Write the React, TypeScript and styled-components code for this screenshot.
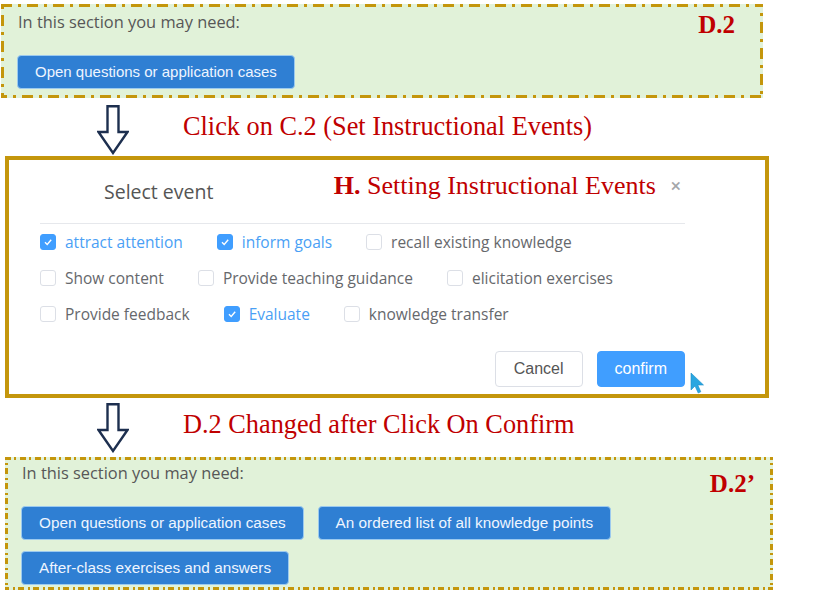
import React from "react";
import styled, { createGlobalStyle } from "styled-components";

const Global = createGlobalStyle`
  html, body { margin: 0; padding: 0; background: #ffffff; }
  #root { width: 830px; height: 592px; overflow: hidden; }
  * { box-sizing: border-box; }
`;

const GOLD = "#c4960c";
const RED = "#c00000";
const UI_FONT = `"Open Sans", Roboto, "Liberation Sans", sans-serif`;

const Page = styled.div`
  width: 830px;
  height: 592px;
  display: flex;
  flex-direction: column;
  padding-top: 4px;
  background: #fff;
`;

const Panel = styled.section<{ $left: number; $w: number; $h: number; $pt: number; $pl: number; $pr: number }>`
  position: relative;
  margin-left: ${(p) => p.$left}px;
  width: ${(p) => p.$w}px;
  height: ${(p) => p.$h}px;
  flex: none;
  background: #e1f2d9;
  padding: ${(p) => p.$pt}px ${(p) => p.$pr}px 0 ${(p) => p.$pl}px;
`;

const BorderSvg = styled.svg`
  position: absolute;
  inset: 0;
  width: 100%;
  height: 100%;
  pointer-events: none;
  overflow: hidden;
`;

const DashBorder = ({ dash }: { dash: string }) => (
  <BorderSvg>
    <rect x="0" y="0" width="100%" height="100%" fill="none" stroke={GOLD} strokeWidth="6" strokeDasharray={dash} />
  </BorderSvg>
);

const PanelHeader = styled.div`
  display: flex;
  align-items: flex-start;
  justify-content: space-between;
`;

const Hint = styled.div<{ $ml: number }>`
  margin-left: ${(p) => p.$ml}px;
  font-family: ${UI_FONT};
  font-size: 16.4px;
  line-height: 20px;
  color: #575757;
`;

const Tag = styled.div<{ $mt: number }>`
  margin-top: ${(p) => p.$mt}px;
  font-family: "Liberation Serif", "Times New Roman", serif;
  font-weight: bold;
  font-size: 25px;
  line-height: 30px;
  color: ${RED};
`;

const ResourceList = styled.div<{ $mt: number }>`
  margin-top: ${(p) => p.$mt}px;
  display: flex;
  flex-wrap: wrap;
  column-gap: 14px;
  row-gap: 11px;
  width: 620px;
`;

const ResourceButton = styled.button<{ $size: number }>`
  height: 34px;
  padding: 0 17px;
  border: 1px solid #9ccaef;
  border-radius: 4px;
  background: #2f7fd3;
  color: #eef5ff;
  font-family: "Liberation Sans", Arial, sans-serif;
  font-size: ${(p) => p.$size}px;
  line-height: 32px;
  white-space: nowrap;
  cursor: pointer;
`;

const StepRow = styled.div<{ $h: number }>`
  height: ${(p) => p.$h}px;
  flex: none;
  display: flex;
  align-items: flex-start;
  padding-left: 97px;
`;

const ArrowSvg = styled.svg<{ $mt: number }>`
  margin-top: ${(p) => p.$mt}px;
  width: 32px;
  height: 50px;
  flex: none;
`;

const Caption = styled.div<{ $mt: number }>`
  margin-top: ${(p) => p.$mt}px;
  margin-left: 54px;
  font-family: "Liberation Serif", "Times New Roman", serif;
  font-size: 26.3px;
  line-height: 30px;
  color: ${RED};
  white-space: nowrap;
`;

const DownArrow = ({ mt }: { mt: number }) => (
  <ArrowSvg $mt={mt} viewBox="0 0 32 50">
    <path
      d="M10.5 1.2 H21.5 V27 H30.5 L16 48 L1.5 27 H10.5 Z"
      fill="#fff"
      stroke="#1d2f4f"
      strokeWidth="2.4"
      strokeLinejoin="miter"
    />
  </ArrowSvg>
);

const Dialog = styled.div`
  position: relative;
  margin-left: 5px;
  width: 764px;
  height: 242px;
  flex: none;
  border: 4px solid ${GOLD};
  background: #fff;
  padding: 0 80px 0 31px;
  font-family: ${UI_FONT};
`;

const DialogHeader = styled.div`
  height: 64px;
  display: flex;
  align-items: flex-start;
  border-bottom: 1px solid #e6e8ec;
`;

const DialogTitle = styled.div`
  margin-top: 19px;
  margin-left: 64px;
  font-size: 19.5px;
  line-height: 26px;
  color: #555;
`;

const Annotation = styled.div`
  margin-top: 11px;
  margin-left: auto;
  margin-right: 15px;
  font-family: "Liberation Serif", "Times New Roman", serif;
  font-size: 26px;
  line-height: 30px;
  color: ${RED};
  white-space: nowrap;
  b { font-weight: bold; }
`;

const Close = styled.div`
  margin-top: 16px;
  margin-right: 4px;
  font-family: Roboto, "Liberation Sans", sans-serif;
  font-size: 19px;
  line-height: 20px;
  color: #a3a6ab;
`;

const OptionRow = styled.div`
  height: 36px;
  display: flex;
  align-items: center;
  column-gap: 34px;
`;

const Option = styled.label<{ $checked: boolean }>`
  display: flex;
  align-items: center;
  gap: 9px;
  font-size: 15.5px;
  color: ${(p) => (p.$checked ? "#4a9ff5" : "#66686c")};
  white-space: nowrap;
`;

const Box = styled.span<{ $checked: boolean }>`
  width: 16px;
  height: 16px;
  flex: none;
  border-radius: 3px;
  border: 1px solid ${(p) => (p.$checked ? "#409eff" : "#dcdfe6")};
  background: ${(p) => (p.$checked ? "#409eff" : "#fff")};
  display: flex;
  align-items: center;
  justify-content: center;
`;

const Footer = styled.div`
  margin-top: 19px;
  display: flex;
  justify-content: flex-end;
  gap: 14px;
`;

const DialogButton = styled.button<{ $primary?: boolean }>`
  height: 36px;
  padding: 0 ${(p) => (p.$primary ? 17 : 18)}px;
  border-radius: 4px;
  border: 1px solid ${(p) => (p.$primary ? "#409eff" : "#dcdfe6")};
  background: ${(p) => (p.$primary ? "#409eff" : "#fff")};
  color: ${(p) => (p.$primary ? "#fff" : "#555")};
  font-family: "Liberation Sans", Arial, sans-serif;
  font-size: 16px;
  cursor: pointer;
`;

const Pointer = styled.svg`
  position: absolute;
  left: 681px;
  top: 212px;
  width: 16px;
  height: 22px;
`;

type Opt = { label: string; checked?: boolean };
const rows: Opt[][] = [
  [{ label: "attract attention", checked: true }, { label: "inform goals", checked: true }, { label: "recall existing knowledge" }],
  [{ label: "Show content" }, { label: "Provide teaching guidance" }, { label: "elicitation exercises" }],
  [{ label: "Provide feedback" }, { label: "Evaluate", checked: true }, { label: "knowledge transfer" }],
];

const Check = () => (
  <svg width="10" height="10" viewBox="0 0 10 10">
    <path d="M2 5.2 L4.2 7.4 L8.2 2.8" fill="none" stroke="#fff" strokeWidth="1.4" />
  </svg>
);

export default function App() {
  return (
    <Page>
      <Global />
      <Panel $left={1} $w={762} $h={94} $pt={8} $pl={16} $pr={28}>
        <DashBorder dash="11 6 3 6" />
        <PanelHeader>
          <Hint $ml={1}>In this section you may need:</Hint>
          <Tag $mt={-2}>D.2</Tag>
        </PanelHeader>
        <ResourceList $mt={15}>
          <ResourceButton $size={15}>Open questions or application cases</ResourceButton>
        </ResourceList>
      </Panel>

      <StepRow $h={58}>
        <DownArrow mt={7} />
        <Caption $mt={14}>Click on C.2 (Set Instructional Events)</Caption>
      </StepRow>

      <Dialog>
        <DialogHeader>
          <DialogTitle>Select event</DialogTitle>
          <Annotation>
            <b>H.</b> Setting Instructional Events
          </Annotation>
          <Close>×</Close>
        </DialogHeader>
        {rows.map((row, i) => (
          <OptionRow key={i}>
            {row.map((o) => (
              <Option key={o.label} $checked={!!o.checked}>
                <Box $checked={!!o.checked}>{o.checked && <Check />}</Box>
                {o.label}
              </Option>
            ))}
          </OptionRow>
        ))}
        <Footer>
          <DialogButton>Cancel</DialogButton>
          <DialogButton $primary>confirm</DialogButton>
        </Footer>
        <Pointer viewBox="0 0 16 22">
          <path d="M1 1 L1 18 L5 14 L8.2 21 L10.8 19.8 L7.8 13 L13.5 13 Z" fill="#2aa6e0" stroke="#1f8fc8" strokeWidth="0.6" />
        </Pointer>
      </Dialog>

      <StepRow $h={59}>
        <DownArrow mt={5} />
        <Caption $mt={12}>D.2 Changed after Click On Confirm</Caption>
      </StepRow>

      <Panel $left={5} $w={768} $h={133} $pt={6} $pl={16} $pr={18}>
        <DashBorder dash="6 3 2 4" />
        <PanelHeader>
          <Hint $ml={1}>In this section you may need:</Hint>
          <Tag $mt={6}>D.2’</Tag>
        </PanelHeader>
        <ResourceList $mt={7}>
          <ResourceButton $size={15.3}>Open questions or application cases</ResourceButton>
          <ResourceButton $size={15.3}>An ordered list of all knowledge points</ResourceButton>
          <ResourceButton $size={15.3}>After-class exercises and answers</ResourceButton>
        </ResourceList>
      </Panel>
    </Page>
  );
}
